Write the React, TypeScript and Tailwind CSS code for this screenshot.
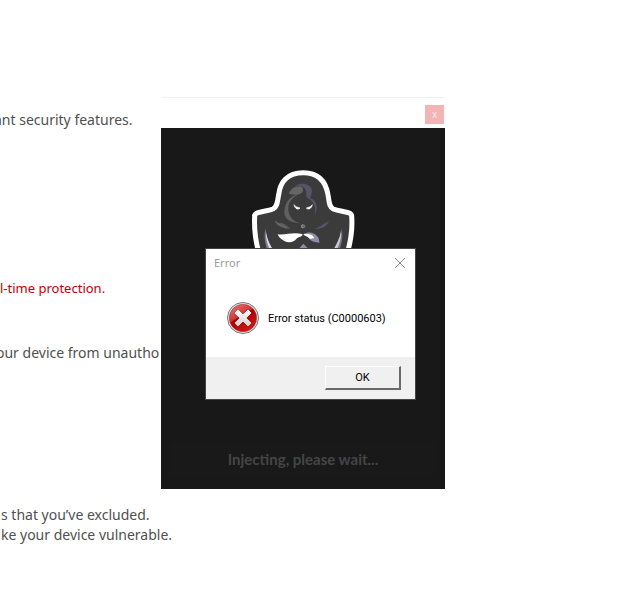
import { FC } from 'react';

const HoodLogo: FC = () => (
  <svg viewBox="0 0 390 276" className="h-[92px] w-[130px]" aria-hidden="true">
    <path
      d="M56 276 C46 240 42 205 44 168 C44 154 76 156 99 147 C113 140 112 124 116 104 C120 68 140 38 190 38 C240 38 258 68 264 104 C268 124 266 140 280 147 C302 156 335 154 335 168 C338 205 333 240 323 276 Z"
      fill="#3b3b3c"
      stroke="#fff"
      strokeWidth="15"
      strokeLinejoin="round"
    />
    <path d="M164 78 C181 66 207 70 214 85 C218 98 214 106 210 114 C229 119 236 142 225 164 C228 140 221 125 204 115 C191 107 207 94 190 82 C181 76 172 77 164 78 Z" fill="#56546a" />
    <path d="M147 102 C151 85 169 76 184 80 C193 85 190 99 177 103 C165 107 156 101 147 102 Z" fill="#666" />
    <path d="M178 103 C145 116 138 145 151 169 C157 180 168 187 180 190 C150 188 132 176 133 156 C134 127 151 106 178 103 Z" fill="#606060" />
    <path d="M162 134 C166 142 174 141 180 144 C176 150 165 148 162 134 Z" fill="#fff" stroke="#fff" strokeWidth="2" />
    <path d="M217 134 C213 142 205 141 199 144 C203 150 214 148 217 134 Z" fill="#fff" stroke="#fff" strokeWidth="2" />
    <path d="M104 181 C114 191 132 192 144 207 C126 203 108 197 104 181 Z" fill="#666" />
    <path d="M119 188 C132 187 142 201 155 207 C138 205 127 197 119 188 Z" fill="#606060" />
    <path d="M267 184 C258 202 242 208 224 207 C240 202 251 190 267 184 Z" fill="#56546a" />
    <circle cx="190" cy="199" r="6" fill="#6c6c73" />
    <path d="M189 194 a5 5 0 0 0 0 10" fill="none" stroke="#aaa" strokeWidth="2" />
    <path d="M113 223 C137 226 161 215 188 223 C187 231 178 230 171 235 C162 247 146 250 133 243 C123 238 116 231 113 223 Z" fill="#fff" />
    <path d="M190 223 C204 214 222 217 232 229 C239 237 236 242 239 248 C225 248 212 244 207 235 C203 229 195 229 190 223 Z" fill="#8e8caf" />
    <path d="M190 223 C203 220 219 222 223 235 C216 234 213 239 207 235 C203 229 195 229 190 223 Z" fill="#fff" />
    <path d="M76 205 C78 232 88 252 101 276 L84 276 C74 250 72 226 76 205 Z" fill="#8280a0" />
    <path d="M78 216 C81 238 91 258 103 276 L94 276 C82 255 77 237 78 216 Z" fill="#ddd" />
    <path d="M305 204 C304 232 295 252 282 276 L296 276 C307 250 309 226 305 204 Z" fill="#777594" />
    <path d="M303 212 C300 234 289 254 276 276 L286 276 C298 255 305 236 303 212 Z" fill="#ccc" />
    <path d="M176 267 L190 251 L206 267 Z" fill="#8e8caf" />
  </svg>
);

const ErrorIcon: FC = () => (
  <svg viewBox="0 0 32 32" className="size-8 shrink-0" aria-hidden="true">
    <defs>
      <linearGradient id="error-red" x1="0" y1="0" x2="0.6" y2="1">
        <stop offset="0" stopColor="#e58080" />
        <stop offset="0.48" stopColor="#d03434" />
        <stop offset="0.52" stopColor="#ac0000" />
        <stop offset="1" stopColor="#cf1717" />
      </linearGradient>
      <linearGradient id="error-cross" x1="0" y1="0" x2="0" y2="1">
        <stop offset="0" stopColor="#fff" />
        <stop offset="1" stopColor="#d2d2d2" />
      </linearGradient>
    </defs>
    <circle cx="16" cy="16" r="15.5" fill="#e8e8e8" stroke="#777" />
    <circle cx="16" cy="16" r="13.7" fill="url(#error-red)" stroke="#a33" strokeWidth="0.6" />
    <path
      d="M11 8 L16 13 L21 8 L24 11 L19 16 L24 21 L21 24 L16 19 L11 24 L8 21 L13 16 L8 11 Z"
      fill="url(#error-cross)"
      stroke="url(#error-cross)"
      strokeWidth="1"
      strokeLinejoin="round"
    />
  </svg>
);

const SettingsPage: FC = () => (
  <main className="overflow-hidden whitespace-nowrap pt-[110px] font-['Noto_Sans',sans-serif] text-sm leading-5 text-[#505050]">
    <p className="-ml-1.5">ant security features.</p>
    <p className="mt-[148px] text-[13px] text-[#c50000]">l-time protection.</p>
    <p className="-ml-1 mt-[45px]">our device from unautho</p>
    <p className="mt-[142px] pl-px">
      s that you’ve excluded.
      <br />
      ke your device vulnerable.
    </p>
  </main>
);

const ErrorDialog: FC = () => (
  <div
    role="alertdialog"
    aria-labelledby="error-title"
    aria-describedby="error-message"
    className="absolute left-11 top-[151px] w-[211px] border border-[#444] bg-white text-[11px]"
  >
    <header className="flex h-7 items-center justify-between pl-2 pr-[7px]">
      <h2 id="error-title" className="font-['Noto_Sans',sans-serif] text-[#999]">
        Error
      </h2>
      <button type="button" aria-label="Close" className="p-0.5">
        <svg viewBox="0 0 12 12" className="size-3" aria-hidden="true">
          <path d="M1 1 L11 11 M11 1 L1 11" stroke="#888" fill="none" />
        </svg>
      </button>
    </header>
    <div className="flex h-20 items-center gap-[9px] whitespace-nowrap pl-[21px] pt-0.5 text-black">
      <ErrorIcon />
      <p id="error-message" className="pt-0.5 font-[Roboto,sans-serif]">
        Error status (C0000603)
      </p>
    </div>
    <footer className="flex h-[42px] items-center justify-end bg-[#f0f0f0] pr-3.5">
      <button
        type="button"
        className="h-6 w-[76px] border-b-2 border-l border-r-2 border-t border-b-[#696969] border-l-white border-r-[#696969] border-t-white bg-[#f0f0f0] pt-0.5 font-[Roboto,sans-serif] text-black"
      >
        OK
      </button>
    </footer>
  </div>
);

const InjectorWindow: FC = () => (
  <section className="absolute left-[161px] top-[97px] w-[284px]">
    <header className="flex h-[31px] items-center justify-end border-t border-[#f1f1f1] bg-white pr-px pt-[3px]">
      <button
        type="button"
        aria-label="Close injector"
        className="size-[19px] bg-[#f4b4b6] pb-0.5 text-[10px] leading-none text-[#fce8e8]"
      >
        x
      </button>
    </header>
    <div className="flex h-[361px] flex-col items-center justify-between bg-[#181818] pb-[14px] pt-8">
      <div className="pl-1">
        <HoodLogo />
      </div>
      <p className="flex h-8 w-[264px] items-center justify-center bg-[#191919] font-[Lato,sans-serif] text-[15px] font-bold text-[#454545]">
        Injecting, please wait...
      </p>
    </div>
    <ErrorDialog />
  </section>
);

const App: FC = () => (
  <div className="relative min-h-screen overflow-hidden bg-white font-['Open_Sans',sans-serif]">
    <SettingsPage />
    <InjectorWindow />
  </div>
);

export default App;
